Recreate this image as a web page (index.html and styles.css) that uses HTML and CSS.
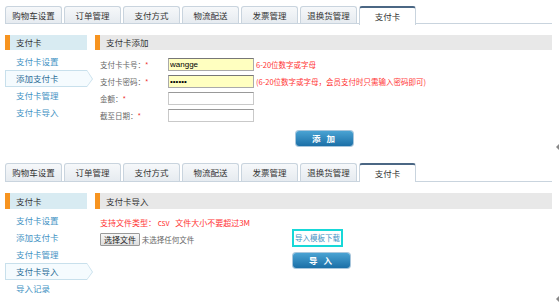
FILE: index.html
```html
<html>
<head>
<link rel="stylesheet" href="styles.css">
<title>支付卡</title>
</head>
<body>

<div class="section first">
	<div class="main">
		<ul class="tabs">
			<li>购物车设置</li>
			<li>订单管理</li>
			<li>支付方式</li>
			<li>物流配送</li>
			<li>发票管理</li>
			<li>退换货管理</li>
			<li class="on">支付卡</li>
		</ul>
		<div class="body">
			<div class="side">
				<div class="side-title">支付卡</div>
				<a class="item">支付卡设置</a>
				<a class="item on">添加支付卡</a>
				<a class="item">支付卡管理</a>
				<a class="item">支付卡导入</a>
			</div>
			<div class="content">
				<div class="title">支付卡添加</div>
				<table class="form">
					<tr>
						<td class="lab">支付卡卡号：<span class="star">*</span></td>
						<td><input type="text" class="txt hl" value="wangge"></td>
						<td class="tip">6-20位数字或字母</td>
					</tr>
					<tr>
						<td class="lab">支付卡密码：<span class="star">*</span></td>
						<td><input type="password" class="txt hl" value="wangge"></td>
						<td class="tip">(6-20位数字或字母，会员支付时只需输入密码即可)</td>
					</tr>
					<tr>
						<td class="lab">金额：<span class="star">*</span></td>
						<td><input type="text" class="txt"></td>
						<td></td>
					</tr>
					<tr>
						<td class="lab">截至日期：<span class="star">*</span></td>
						<td><input type="text" class="txt"></td>
						<td></td>
					</tr>
				</table>
				<div class="btn-row"><span class="btn">添 加</span></div>
			</div>
		</div>
	</div>
	<span class="mark"></span>
</div>

<div class="section second">
	<div class="main">
		<ul class="tabs">
			<li>购物车设置</li>
			<li>订单管理</li>
			<li>支付方式</li>
			<li>物流配送</li>
			<li>发票管理</li>
			<li>退换货管理</li>
			<li class="on">支付卡</li>
		</ul>
		<div class="body">
			<div class="side">
				<div class="side-title">支付卡</div>
				<a class="item">支付卡设置</a>
				<a class="item">添加支付卡</a>
				<a class="item">支付卡管理</a>
				<a class="item on">支付卡导入</a>
				<a class="item">导入记录</a>
			</div>
			<div class="content">
				<div class="title">支付卡导入</div>
				<div class="import">
					<div class="note">支持文件类型： csv &nbsp; 文件大小不要超过3M</div>
					<div class="file"><span class="fbtn">选择文件</span> 未选择任何文件</div>
					<div class="down"><a class="focus">导入模板下载</a></div>
					<div></div>
					<div class="imp"><span class="btn">导 入</span></div>
				</div>
			</div>
		</div>
	</div>
	<span class="mark"></span>
</div>

</body>
</html>
```

FILE: styles.css
```css
body{margin:0; background:#fff; font-family:"Noto Sans CJK SC","DejaVu Sans",sans-serif; font-size:8px; color:#333;}
ul{margin:0; padding:0; list-style:none;}
a{cursor:pointer;}

.section{display:flex; padding-left:5px;}
.section.first{height:162px;}
.section.second{height:142px;}
.main{width:550px;}
.mark{align-self:flex-end; width:0; height:0; margin-left:1px; border:3px solid transparent; border-right:3px solid #888;}
.first .mark{margin-bottom:12px;}
.second .mark{margin-bottom:2px;}

/* tabs */
.tabs{display:flex; gap:2px; margin-top:6px; height:17px; border-bottom:1px solid #c9d4de;}
.second .tabs{margin-top:1px; height:18px;}
.tabs li{width:55px; height:16px; line-height:16px; text-align:center; border:1px solid #c9d4de; border-bottom:none; border-radius:3px 3px 0 0; background:linear-gradient(#f6f8fa,#e6ebf0); color:#333; font-size:8.5px;}
.second .tabs li{height:17px; line-height:17px;}
.tabs li.on{background:#fff; border-top:2px solid #4b6784; height:16px; margin-bottom:-1px; padding-bottom:1px;}

.body{display:flex; gap:8px; margin-top:11px;}

/* side */
.side{width:82px;}
.side-title{height:15px; line-height:15px; background:#d8ebf2; border-left:5px solid #f79420; padding-left:6px; color:#333; font-size:8.5px;}
.second .side-title{height:16px; line-height:16px;}
.item{display:block; height:17px; line-height:17px; padding-left:11px; color:#4593c4; font-size:8.5px;}
.side-title + .item{margin-top:3px;}
.item.on{position:relative; color:#2d6e98; background:#f5fbfe; border:1px solid #c8e0ec; border-right:none; height:15px; line-height:15px; padding-left:10px;}
.item.on:after{content:""; position:absolute; right:-6px; top:-1px; width:0; height:0; border-top:9px solid transparent; border-bottom:8px solid transparent; border-left:6px solid #c8e0ec;}
.item.on:before{content:""; position:absolute; right:-5px; top:0; width:0; height:0; border-top:8px solid transparent; border-bottom:7px solid transparent; border-left:5px solid #f5fbfe; z-index:1;}

/* content */
.content{flex:1;}
.title{height:15px; line-height:15px; background:#e8e8e8; border-left:5px solid #f79420; padding-left:6px; font-size:8.5px; color:#333;}
.second .title{height:16px; line-height:16px;}

.form{border-collapse:collapse; margin:6px 0 0 5px;}
.form td{padding:0; height:17px; font-size:7.5px; white-space:nowrap;}
.form td.lab{width:68px; color:#666;}
.star{color:#e33;}
.txt{width:86px; height:13px; border:1px solid #c9c9c9; border-top-color:#999; padding:0 1px; font-size:8px; font-family:"Liberation Sans",sans-serif; margin:0; box-sizing:border-box; display:block;}
.txt.hl{background:#ffffc0; border-color:#aaa; border-top-color:#777;}
.tip{color:#f33; padding-left:2px !important;}

.btn-row{padding-left:201px; margin-top:7px;}
.btn{display:inline-block; width:57px; height:15px; line-height:15px; text-align:center; color:#fff; font-weight:bold; font-size:8.5px; letter-spacing:2px; border-radius:3px; background:linear-gradient(#4aa3d3,#1b6fa7); box-shadow:0 0 0 1px #a8c6dc;}

.import{display:grid; grid-template-columns:192px auto; align-items:center; padding-left:5px; margin-top:7px;}
.note{grid-column:1 / 3; color:#f33; font-size:8px; height:14px; line-height:14px;}
.file{font-size:7.5px; color:#666; margin-top:1px;}
.fbtn{display:inline-block; border:1px solid #999; background:linear-gradient(#f8f8f8,#ddd); padding:0 3px; height:11px; line-height:11px; color:#222; border-radius:1px; font-size:8px;}
.down{margin-top:-1px;}
.focus{display:inline-block; border:2px solid #17d8d8; padding:0 1px; color:#4593c4; font-size:7.5px; height:14px; line-height:14px;}
.imp{padding-left:1px; margin-top:6px;}
```
